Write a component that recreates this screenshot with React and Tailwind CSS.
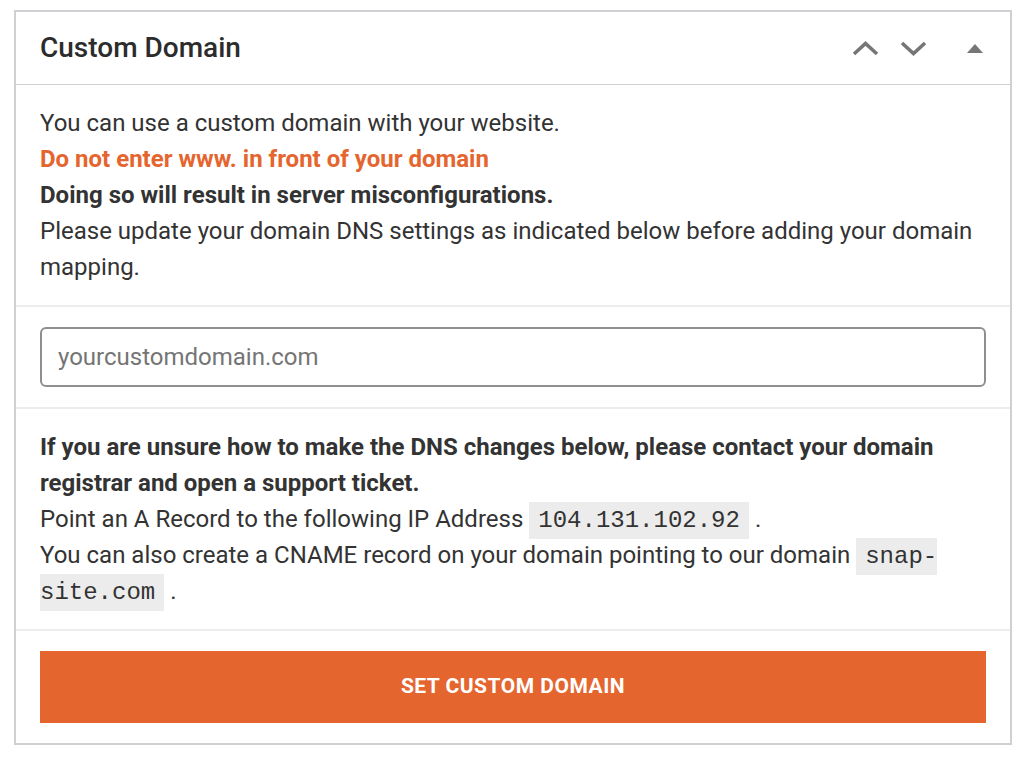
export default function App() {
  return (
    <div className="min-h-screen bg-white pt-[10px] pl-[14px] font-['Roboto',sans-serif]">
      <div className="w-[998px] border-2 border-[#cfcfd4] bg-white text-[#333333]">
        {/* Header */}
        <div className="flex h-[73px] items-center justify-between border-b border-[#cfcfd4] pl-6 pr-[27px]">
          <h2 className="text-[28px] font-medium leading-none text-[#2c2c2c]">Custom Domain</h2>
          <div className="flex items-center">
            <button className="flex h-6 w-[27px] items-center justify-center">
              <svg width="27" height="15" viewBox="0 0 27 15" fill="none">
                <path d="M2 13L13.5 2.5L25 13" stroke="#767676" strokeWidth="3.6" />
              </svg>
            </button>
            <button className="ml-[21px] flex h-6 w-[27px] items-center justify-center">
              <svg width="27" height="15" viewBox="0 0 27 15" fill="none">
                <path d="M2 2L13.5 12.5L25 2" stroke="#767676" strokeWidth="3.6" />
              </svg>
            </button>
            <button className="ml-10 flex h-6 w-4 items-center justify-center">
              <svg width="16" height="9" viewBox="0 0 16 9">
                <path d="M8 0L16 9H0Z" fill="#767676" />
              </svg>
            </button>
          </div>
        </div>

        {/* Intro */}
        <div className="border-b-2 border-[#ececee] px-6 py-5 text-[24px] leading-[36px]">
          <p>You can use a custom domain with your website.</p>
          <p className="font-bold text-[#e5652f]">Do not enter www. in front of your domain</p>
          <p className="font-bold">Doing so will result in server misconfigurations.</p>
          <p>Please update your domain DNS settings as indicated below before adding your domain mapping.</p>
        </div>

        {/* Input */}
        <div className="border-b-2 border-[#ececee] px-6 py-5">
          <input
            type="text"
            placeholder="yourcustomdomain.com"
            className="block h-[60px] w-full rounded-[6px] border-2 border-[#8f8f92] px-4 text-[24px] text-[#333] outline-none placeholder:text-[#757575]"
          />
        </div>

        {/* DNS info */}
        <div className="border-b-2 border-[#ececee] px-6 py-5 text-[24px] leading-[36px]">
          <p className="font-bold">
            If you are unsure how to make the DNS changes below, please contact your domain registrar and open a support ticket.
          </p>
          <p>
            Point an A Record to the following IP Address{' '}
            <code className="bg-[#ececec] px-[9px] py-[5px] font-['Liberation_Mono',monospace] text-[24px] leading-[20px]">104.131.102.92</code>{' '}
            .
          </p>
          <p>
            You can also create a CNAME record on your domain pointing to our domain{' '}
            <code className="bg-[#ececec] px-[9px] py-[5px] font-['Liberation_Mono',monospace] text-[24px] leading-[20px]">snap-site.com</code>{' '}
            .
          </p>
        </div>

        {/* Button */}
        <div className="px-6 py-5">
          <button className="flex h-[72px] w-full items-center justify-center bg-[#e5652f] text-[21px] font-bold uppercase tracking-[0.5px] text-white">
            Set Custom Domain
          </button>
        </div>
      </div>
    </div>
  );
}
